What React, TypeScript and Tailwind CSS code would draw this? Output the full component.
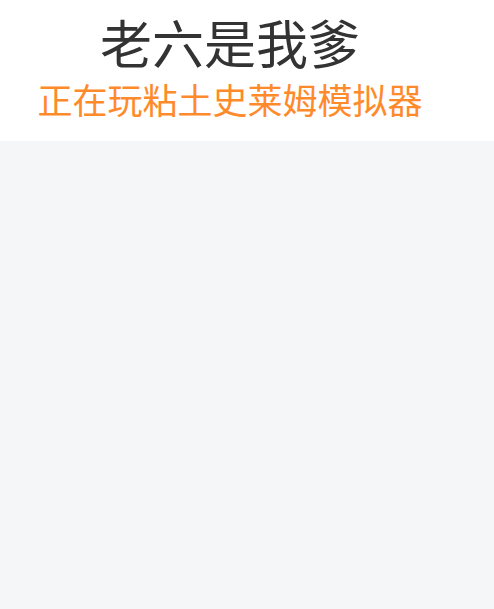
export default function App() {
  return (
    <main className="min-h-[609px] bg-[#f5f6f8] font-['Noto_Sans_CJK_SC','Noto_Sans',sans-serif]">
      <header className="flex h-[141px] flex-col items-center bg-white pr-[34px] pt-[13px]">
        <h1 className="text-[52px] leading-[58px] font-normal text-[#333333]">老六是我爹</h1>
        <p className="mt-[8px] text-[35px] leading-[40px] text-[#ff8a2b]">正在玩粘土史莱姆模拟器</p>
      </header>
    </main>
  );
}
